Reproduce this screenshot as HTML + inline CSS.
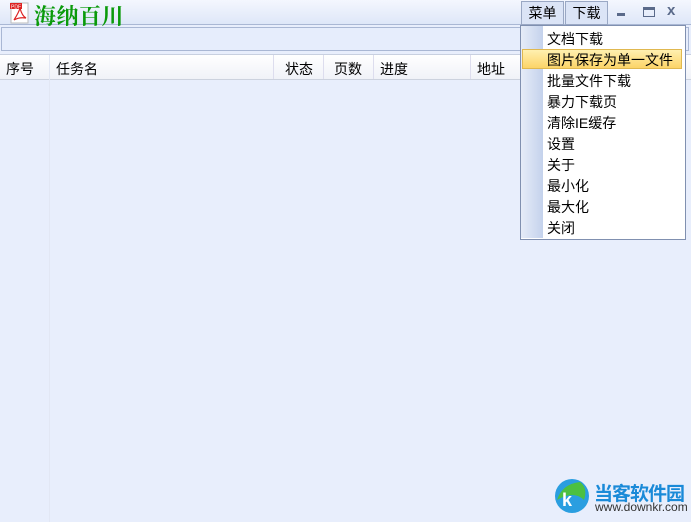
<html><head><style>
body{margin:0;width:691px;height:522px;background:#e8eefc;font-family:"Liberation Sans","Noto Sans CJK SC",sans-serif;font-size:14px;position:relative;overflow:hidden;color:#000}
.a{position:absolute}
</style></head><body>
<div class="a" style="left:0;top:0;width:691px;height:25px;background:linear-gradient(#f4f7fe,#dde6f8)"></div>
<div class="a" style="left:0;top:24px;width:691px;height:1px;background:#a9b7d4"></div>
<svg class="a" style="left:9px;top:2px" width="22" height="22"><rect x="2" y="1" width="17" height="20" fill="#fff" stroke="#bbb"/><rect x="1" y="1" width="12" height="6" fill="#d22"/><text x="2" y="6.5" font-size="5" fill="#fff" font-family="Liberation Sans">PDF</text><path d="M5 18 Q10 10 11 6 Q13 14 17 16 Q10 15 5 18" fill="none" stroke="#d22" stroke-width="1.2"/></svg>
<div class="a" style="left:34px;top:0px;font-size:22px;font-weight:bold;color:#0a9a0a;font-family:'Liberation Serif','Noto Serif CJK SC',serif;letter-spacing:0.5px">海纳百川</div>
<div class="a" style="left:521px;top:1px;width:41px;height:22px;border:1px solid #9aa8c4;background:#dbe4f6;text-align:center;line-height:22px">菜单</div>
<div class="a" style="left:565px;top:1px;width:41px;height:22px;border:1px solid #9aa8c4;background:#dbe4f6;text-align:center;line-height:22px">下载</div>
<div class="a" style="left:617px;top:13px;width:8px;height:3px;background:#5a6a8a"></div>
<div class="a" style="left:643px;top:7px;width:10px;height:6px;border:1px solid #5a6a8a;border-top-width:3px"></div>
<div class="a" style="left:667px;top:2px;color:#5a6a8a;font-weight:bold;font-size:15px">x</div>
<div class="a" style="left:1px;top:27px;width:686px;height:22px;border:1px solid #a9b7d4;background:#e6edfc"></div>
<div class="a" style="left:0;top:54px;width:691px;height:24px;background:linear-gradient(#fff,#f0f2f8);border-top:1px solid #c8d0e0;border-bottom:1px solid #ccd2de"></div>
<div class="a" style="left:49px;top:55px;width:1px;height:467px;background:#e2e7f4"></div>
<div class="a" style="left:273px;top:55px;width:1px;height:24px;background:#dde"></div>
<div class="a" style="left:323px;top:55px;width:1px;height:24px;background:#dde"></div>
<div class="a" style="left:373px;top:55px;width:1px;height:24px;background:#dde"></div>
<div class="a" style="left:470px;top:55px;width:1px;height:24px;background:#dde"></div>
<div class="a" style="left:6px;top:59px">序号</div>
<div class="a" style="left:56px;top:59px">任务名</div>
<div class="a" style="left:285px;top:59px">状态</div>
<div class="a" style="left:334px;top:59px">页数</div>
<div class="a" style="left:380px;top:59px">进度</div>
<div class="a" style="left:477px;top:59px">地址</div>
<div class="a" style="left:520px;top:25px;width:164px;height:213px;border:1px solid #8090b0;background:#fff"></div>
<div class="a" style="left:521px;top:26px;width:22px;height:212px;background:linear-gradient(90deg,#e6ecf8,#c4d2ec)"></div>
<div class="a" style="left:522px;top:49px;width:160px;height:20px;border:1px solid #e0b850;background:linear-gradient(#fff0b0,#fcd468);box-sizing:border-box"></div>
<div class="a" style="left:547px;top:29px;line-height:21px">文档下载<br>图片保存为单一文件<br>批量文件下载<br>暴力下载页<br>清除IE缓存<br>设置<br>关于<br>最小化<br>最大化<br>关闭</div>
<svg class="a" style="left:554px;top:478px" width="36" height="36"><circle cx="18" cy="18" r="17" fill="#2a9ee0"/><path d="M3 22 Q8 6 26 4 Q34 10 30 22 Q20 12 3 22" fill="#4cc040"/><text x="8" y="28" font-size="18" fill="#fff" font-weight="bold" font-family="Liberation Sans">k</text></svg>
<div class="a" style="left:594px;top:479px;font-size:19px;font-weight:bold;color:#1a8ad8;letter-spacing:-1px">当客软件园</div>
<div class="a" style="left:595px;top:500px;font-size:12px;color:#333">www.downkr.com</div>
</body></html>
